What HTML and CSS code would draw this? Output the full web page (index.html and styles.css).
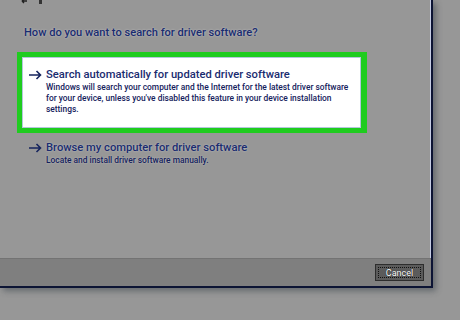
FILE: index.html
```html
<!DOCTYPE html>
<html lang="en">
  <head>
    <meta charset="UTF-8" />
    <title>Update Driver Software</title>
    <link rel="stylesheet" href="styles.css">
  </head>
  <body>
    <div class="window">
      <div class="titlebar">
        <svg class="tb-icons" width="30" height="6" viewBox="0 0 30 6">
          <path d="M2 1 H7 M2 1 L4 -1 M2 1 L4 3" stroke="#222" stroke-width="1.4" fill="none" />
          <rect x="19" y="0" width="3" height="4" fill="#333" />
        </svg>
      </div>

      <div class="content">
        <h2 class="question">How do you want to search for driver software?</h2>

        <div class="highlight">
          <div class="option">
            <svg class="arrow" width="14" height="10" viewBox="0 0 14 10">
              <path d="M1 5 H12.5 M8.5 1 L12.5 5 L8.5 9" stroke="#16255e" stroke-width="1.6" fill="none" />
            </svg>
            <div class="option-text">
              <div class="option-title">Search automatically for updated driver software</div>
              <p>Windows will search your computer and the Internet for the latest driver software for your device, unless you've disabled this feature in your device installation settings.</p>
            </div>
          </div>
        </div>

        <div class="option plain">
          <svg class="arrow" width="14" height="10" viewBox="0 0 14 10">
            <path d="M1 5 H12.5 M8.5 1 L12.5 5 L8.5 9" stroke="#16255e" stroke-width="1.6" fill="none" />
          </svg>
          <div class="option-text">
            <div class="option-title">Browse my computer for driver software</div>
            <p>Locate and install driver software manually.</p>
          </div>
        </div>
      </div>

      <div class="footer">
        <button class="cancel-btn">Cancel</button>
      </div>
    </div>
  </body>
</html>
```

FILE: styles.css
```css
body {
  margin: 0;
  width: 460px;
  height: 320px;
  overflow: hidden;
  background-color: #979797;
  font-family: Roboto, "Noto Sans", sans-serif;
}

.window {
  width: 431px;
  height: 286px;
  display: flex;
  flex-direction: column;
  border-right: 2px solid #0c1434;
  border-bottom: 2px solid #0c1434;
  box-shadow: inset -1px -1px 0 #c6cde4, 3px 3px 6px rgba(40, 50, 60, 0.45);
}

.titlebar {
  height: 6px;
  padding-left: 20px;
}

.tb-icons {
  display: block;
}

.content {
  flex: 1;
  padding: 20px 0 0 17px;
}

.question {
  margin: 0 0 13px 7px;
  font-size: 11.1px;
  font-weight: 500;
  color: #1a2c70;
  text-shadow: 0 0 2px rgba(255, 255, 255, 0.5);
}

.highlight {
  width: 339px;
  border: 5px solid #1fcc1f;
  border-right-width: 6px;
  background-color: #dfe8ef;
  padding: 0;
}

.option {
  display: flex;
  gap: 4px;
  padding: 10px 3px 6px 5px;
}

.highlight .option {
  background-color: #ffffff;
  border: 1px solid #b5c6dc;
  height: 53px;
}

.option.plain {
  padding: 8px 0 0 11px;
}

.arrow {
  flex: none;
  margin-top: 2px;
}

.option-title {
  font-size: 11.2px;
  line-height: 13px;
  font-weight: 500;
  color: #1a2c70;
}

.option-text p {
  margin: 1px 0 0;
  font-size: 8.4px;
  line-height: 11px;
  font-weight: 500;
  color: #14215c;
}

.option.plain .option-title,
.option.plain p {
  text-shadow: 0 0 2px rgba(255, 255, 255, 0.45);
}

.footer {
  height: 27px;
  background-color: #7f7f7f;
  border-top: 1px solid #737373;
  display: flex;
  justify-content: flex-end;
  align-items: center;
  padding-right: 7px;
}

.cancel-btn {
  width: 49px;
  height: 17px;
  padding: 0;
  background-color: #5b5b5b;
  border: 1px solid #2d2d2d;
  color: #ffffff;
  font-family: inherit;
  font-size: 9px;
  outline: 1px dotted #111;
  outline-offset: -4px;
  text-shadow: 0 0 1px #000;
}
```
